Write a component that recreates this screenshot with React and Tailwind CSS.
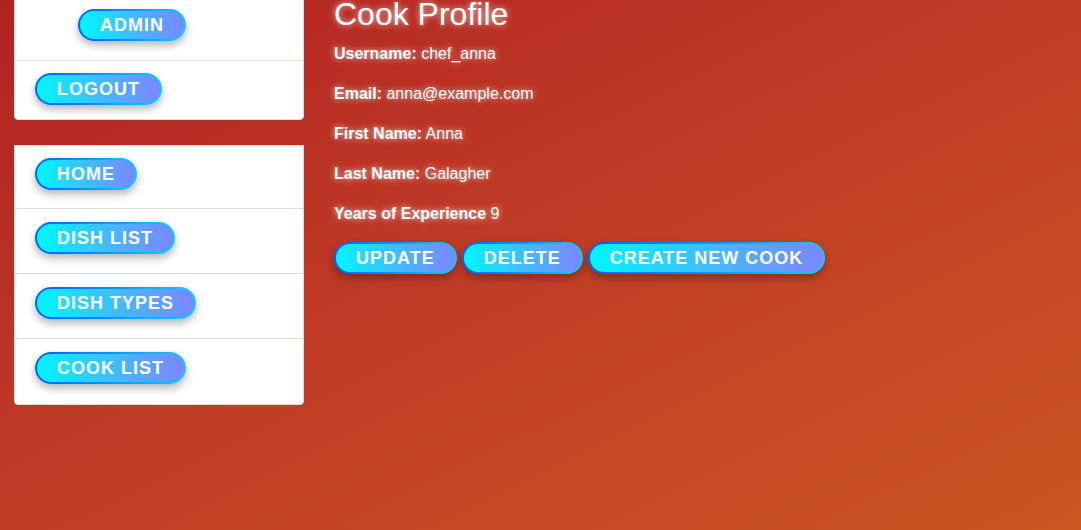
import React from "react";

const GradButton = ({ label, className = "" }) => {
  return (
    <button
      className={
        "rounded-full p-[2px] bg-[linear-gradient(to_right,#0a5cff,#00d2ff)] shadow-[0_4px_8px_rgba(0,0,0,0.3)] " +
        className
      }
    >
      <span className="flex h-[28px] items-center rounded-full bg-[linear-gradient(to_right,#00f6ff,#7c86ff)] px-5 text-[18px] font-bold uppercase tracking-[1px] text-white">
        {label}
      </span>
    </button>
  );
};

const Row = ({ children, className = "h-[65px]" }) => (
  <li className={"px-[20px] pt-[12px] " + className}>{children}</li>
);

const App = () => {
  const fields = [
    ["Username:", "chef_anna"],
    ["Email:", "anna@example.com"],
    ["First Name:", "Anna"],
    ["Last Name:", "Galagher"],
    ["Years of Experience", "9"],
  ];

  return (
    <div className="min-h-[530px] w-full overflow-hidden bg-[linear-gradient(to_bottom_right,#b22222,#c24026_55%,#cb5521)] font-['Liberation_Sans',Arial,sans-serif]">
      <div className="-mt-[4px] flex gap-[30px] pl-[14px]">
        <aside className="flex w-[290px] shrink-0 flex-col gap-6">
          <ul className="divide-y divide-[#dddddd] rounded-b border border-[#dddddd] bg-white">
            <Row className="h-[64px]">
              <GradButton label="Admin" className="ml-[43px]" />
            </Row>
            <Row className="h-[58px]">
              <GradButton label="Logout" />
            </Row>
          </ul>
          <ul className="mt-px divide-y divide-[#dddddd] rounded-b border border-[#dddddd] bg-white">
            <Row className="h-[63px]">
              <GradButton label="Home" />
            </Row>
            <Row className="h-[65px] pt-[13px]">
              <GradButton label="Dish list" />
            </Row>
            <Row className="h-[65px] pt-[13px]">
              <GradButton label="Dish types" />
            </Row>
            <Row className="h-[65px] pt-[13px]">
              <GradButton label="Cook list" />
            </Row>
          </ul>
        </aside>

        <main className="flex flex-col text-white [text-shadow:0_0_6px_rgba(255,255,255,0.75)]">
          <h1 className="mt-[2px] text-[32px] leading-none">Cook Profile</h1>
          <div className="mt-[4px] flex flex-col">
            {fields.map(([label, value]) => (
              <p key={label} className="text-base leading-[40px]">
                <strong className="font-bold">{label}</strong> {value}
              </p>
            ))}
          </div>
          <div className="mt-[8px] flex gap-[5px] [text-shadow:none]">
            <GradButton label="Update" />
            <GradButton label="Delete" />
            <GradButton label="Create new cook" />
          </div>
        </main>
      </div>
    </div>
  );
};

export default App;
